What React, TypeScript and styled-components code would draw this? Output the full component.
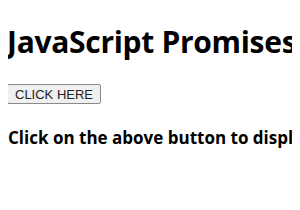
import React from 'react';
import styled, { createGlobalStyle } from 'styled-components';

const GlobalStyle = createGlobalStyle`
  html, body {
    margin: 0;
    background: #fff;
    overflow: hidden;
  }
  body {
    margin: 8px;
    font-family: "Open Sans", "Noto Sans", sans-serif;
    color: #000;
  }
`;

const Page = styled.div`
  display: flex;
  flex-direction: column;
  align-items: flex-start;
  white-space: nowrap;
`;

const Title = styled.h1`
  font-size: 30px;
  font-weight: 700;
  margin: 13px 0 22px -1px;
  letter-spacing: -0.3px;
`;

const Button = styled.button`
  font-family: "Liberation Sans", Arial, sans-serif;
  font-size: 13px;
  padding: 2px 7px 1px;
  margin-left: -1px;
  color: #222;
  background: #f0f0f0;
  border: 1px solid #8a8a8a;
  border-radius: 2px;
  cursor: pointer;
`;

const Message = styled.h3`
  font-size: 17px;
  font-weight: 700;
  margin: 22px 0;
`;

const App: React.FC = () => {
  return (
    <Page>
      <GlobalStyle />
      <Title>JavaScript Promises</Title>
      <Button>CLICK HERE</Button>
      <Message>Click on the above button to display the result</Message>
    </Page>
  );
};

export default App;
